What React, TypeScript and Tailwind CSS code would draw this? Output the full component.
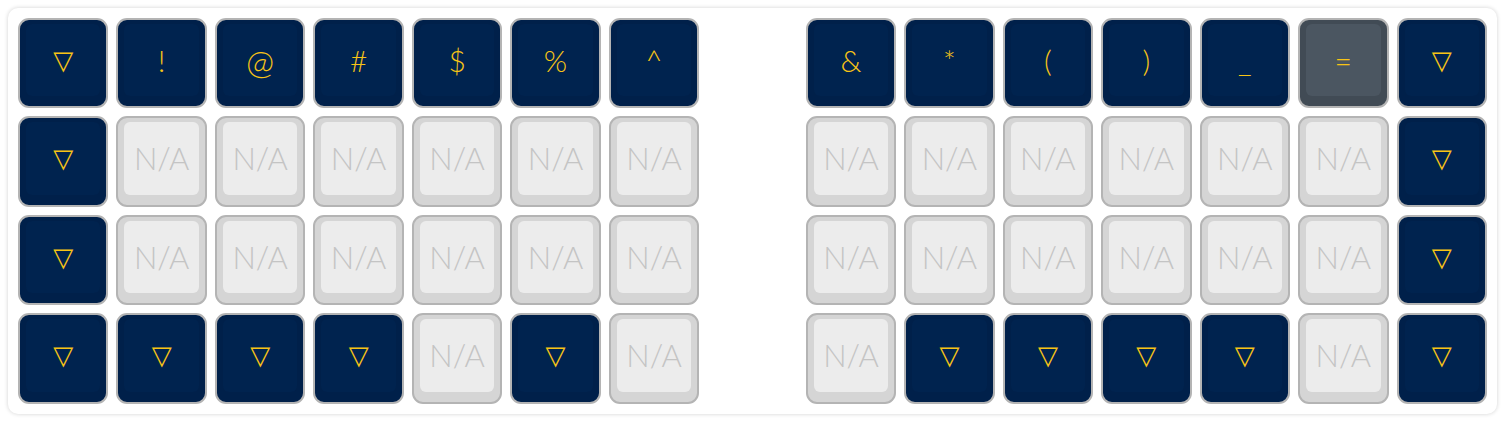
type Key = { label: string; kind: "key" | "na" | "active" | "empty" };

const T = "▽";

const rows: string[][] = [
  [T, "!", "@", "#", "$", "%", "^", "", "&", "*", "(", ")", "_", "=*", T],
  [T, "N/A", "N/A", "N/A", "N/A", "N/A", "N/A", "", "N/A", "N/A", "N/A", "N/A", "N/A", "N/A", T],
  [T, "N/A", "N/A", "N/A", "N/A", "N/A", "N/A", "", "N/A", "N/A", "N/A", "N/A", "N/A", "N/A", T],
  [T, T, T, T, "N/A", T, "N/A", "", "N/A", T, T, T, T, "N/A", T],
];

function toKey(s: string): Key {
  if (s === "") return { label: "", kind: "empty" };
  if (s === "N/A") return { label: s, kind: "na" };
  if (s.endsWith("*") && s.length > 1) return { label: s.slice(0, -1), kind: "active" };
  return { label: s, kind: "key" };
}

function KeyCap({ k }: { k: Key }) {
  if (k.kind === "empty") return <div className="aspect-square" />;

  if (k.kind === "na") {
    return (
      <div className="aspect-square rounded-[11px] border-2 border-[#b4b4b4] bg-[#d5d5d5] px-[6px] pt-[4px] pb-[10px] flex">
        <div className="flex-1 rounded-[6px] bg-[#ececec] flex items-center justify-center text-[31px] font-light text-[#c4c4c4] [font-family:Lato,'Open_Sans',sans-serif]">
          N/A
        </div>
      </div>
    );
  }

  const outer = k.kind === "active" ? "bg-[#414b55]" : "bg-[#00204a]";
  const inner = k.kind === "active" ? "bg-[#4b5661]" : "bg-[#00234f]";
  return (
    <div className={`aspect-square rounded-[11px] border-2 border-[#b4b4b4] ${outer} px-[6px] pt-[4px] pb-[10px] flex`}>
      <div className={`flex-1 rounded-[6px] ${inner} flex items-center justify-center text-[#f8c416]`}>
        {k.label === T ? (
          <span className="text-[26px] [font-family:'DejaVu_Sans',sans-serif]">{k.label}</span>
        ) : (
          <span className={`font-light [font-family:Lato,'Open_Sans',sans-serif] ${k.label === "@" ? "text-[34px]" : "text-[30px]"}`}>
            {k.label}
          </span>
        )}
      </div>
    </div>
  );
}

export default function App() {
  return (
    <div className="w-[1505px] h-[421px] bg-white p-2">
      <div className="rounded-[10px] bg-white p-[10px] shadow-[0_0_4px_rgba(0,0,0,0.18)]">
        <div className="grid grid-cols-15 gap-2">
          {rows.flatMap((r, ri) => r.map((s, ci) => <KeyCap key={`${ri}-${ci}`} k={toKey(s)} />))}
        </div>
      </div>
    </div>
  );
}
